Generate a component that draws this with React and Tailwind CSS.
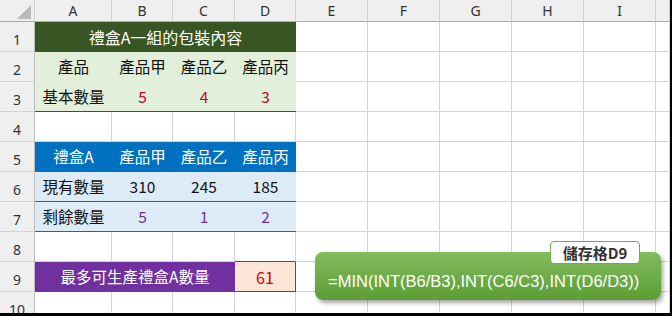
import React from "react";

const CJK = { fontFamily: '"Noto Sans CJK TC", "Noto Sans", sans-serif' };
const HDR = { fontFamily: '"Noto Sans", "Liberation Sans", sans-serif' };

const extraCols = ["w-[72px]", "w-[72px]", "w-[72px]", "w-[72px]", "w-[72px]", "w-[14px]"];

function RowHead({ n, h = "h-[30px]" }) {
  return (
    <div
      className={`w-[35px] ${h} shrink-0 bg-[#efefef] border-r border-b border-r-[#bcbcbc] border-b-[#d4d4d4] flex items-end justify-center pb-[2px] text-[14px] text-[#333] leading-none`}
      style={HDR}
    >
      <span className="pb-[2px]">{n}</span>
    </div>
  );
}

function Blank({ w, h = "h-[30px]", extra = "" }) {
  return <div className={`${w} ${h} shrink-0 border-r border-b border-[#d4d4d4] ${extra}`} />;
}

function Extras({ h = "h-[30px]" }) {
  return extraCols.map((w, i) => <Blank key={i} w={w} h={h} />);
}

function Cell({ w, bg, children, extra = "", color = "text-[#111]" }) {
  return (
    <div
      className={`${w} h-[30px] shrink-0 ${bg} ${color} flex items-center justify-center text-[15.5px] leading-none ${extra}`}
      style={CJK}
    >
      {children}
    </div>
  );
}

export default function App() {
  return (
    <div className="w-[672px] h-[316px] bg-black">
      <div className="relative w-[670px] h-[313px] bg-white overflow-hidden">
        {/* column header */}
        <div className="flex h-[22px]">
          <div className="w-[35px] h-[22px] shrink-0 bg-[#efefef] border-r border-b border-r-[#d0d0d0] border-b-[#ababab] flex justify-end items-end pr-[3px] pb-[2px]">
            <svg width="14" height="14" viewBox="0 0 14 14">
              <polygon points="14,0 14,14 0,14" fill="#b9b9b9" />
            </svg>
          </div>
          {[
            ["A", "w-[77px]"],
            ["B", "w-[61px]"],
            ["C", "w-[62px]"],
            ["D", "w-[61px]"],
            ["E", "w-[72px]"],
            ["F", "w-[72px]"],
            ["G", "w-[72px]"],
            ["H", "w-[72px]"],
            ["I", "w-[72px]"],
            ["", "w-[14px]"],
          ].map(([l, w]) => (
            <div
              key={w + l}
              className={`${w} h-[22px] shrink-0 bg-[#efefef] border-r border-b border-r-[#d0d0d0] border-b-[#ababab] flex items-center justify-center text-[14px] text-[#333] leading-none`}
              style={HDR}
            >
              {l}
            </div>
          ))}
        </div>

        {/* row 1 */}
        <div className="flex">
          <RowHead n="1" />
          <Cell w="w-[261px]" bg="bg-[#375623]" color="text-white" extra="text-[16px]">
            禮盒A一組的包裝內容
          </Cell>
          <Extras />
        </div>

        {/* row 2 */}
        <div className="flex">
          <RowHead n="2" />
          <Cell w="w-[77px]" bg="bg-[#e2efda]">產品</Cell>
          <Cell w="w-[61px]" bg="bg-[#e2efda]">產品甲</Cell>
          <Cell w="w-[62px]" bg="bg-[#e2efda]">產品乙</Cell>
          <Cell w="w-[61px]" bg="bg-[#e2efda]">產品丙</Cell>
          <Extras />
        </div>

        {/* row 3 */}
        <div className="flex">
          <RowHead n="3" />
          <Cell w="w-[77px]" bg="bg-[#e2efda]" extra="border-b border-[#375623]">基本數量</Cell>
          <Cell w="w-[61px]" bg="bg-[#e2efda]" color="text-[#c8002c]" extra="border-b border-[#375623]">5</Cell>
          <Cell w="w-[62px]" bg="bg-[#e2efda]" color="text-[#c8002c]" extra="border-b border-[#375623]">4</Cell>
          <Cell w="w-[61px]" bg="bg-[#e2efda]" color="text-[#c8002c]" extra="border-b border-[#375623]">3</Cell>
          <Extras />
        </div>

        {/* row 4 */}
        <div className="flex">
          <RowHead n="4" />
          <Blank w="w-[77px]" />
          <Blank w="w-[61px]" />
          <Blank w="w-[62px]" />
          <Blank w="w-[61px]" />
          <Extras />
        </div>

        {/* row 5 */}
        <div className="flex">
          <RowHead n="5" />
          <Cell w="w-[77px]" bg="bg-[#0070c0]" color="text-white">禮盒A</Cell>
          <Cell w="w-[61px]" bg="bg-[#0070c0]" color="text-white">產品甲</Cell>
          <Cell w="w-[62px]" bg="bg-[#0070c0]" color="text-white">產品乙</Cell>
          <Cell w="w-[61px]" bg="bg-[#0070c0]" color="text-white">產品丙</Cell>
          <Extras />
        </div>

        {/* row 6 */}
        <div className="flex">
          <RowHead n="6" />
          <Cell w="w-[77px]" bg="bg-[#ddebf7]" extra="border-b border-[#0070c0]">現有數量</Cell>
          <Cell w="w-[61px]" bg="bg-[#ddebf7]" extra="border-b border-[#0070c0]">310</Cell>
          <Cell w="w-[62px]" bg="bg-[#ddebf7]" extra="border-b border-[#0070c0]">245</Cell>
          <Cell w="w-[61px]" bg="bg-[#ddebf7]" extra="border-b border-[#0070c0]">185</Cell>
          <Extras />
        </div>

        {/* row 7 */}
        <div className="flex">
          <RowHead n="7" />
          <Cell w="w-[77px]" bg="bg-[#ddebf7]" extra="border-b border-[#0070c0]">剩餘數量</Cell>
          <Cell w="w-[61px]" bg="bg-[#ddebf7]" color="text-[#7030a0]" extra="border-b border-[#0070c0]">5</Cell>
          <Cell w="w-[62px]" bg="bg-[#ddebf7]" color="text-[#7030a0]" extra="border-b border-[#0070c0]">1</Cell>
          <Cell w="w-[61px]" bg="bg-[#ddebf7]" color="text-[#7030a0]" extra="border-b border-[#0070c0]">2</Cell>
          <Extras />
        </div>

        {/* row 8 */}
        <div className="flex">
          <RowHead n="8" />
          <Blank w="w-[77px]" />
          <Blank w="w-[61px]" />
          <Blank w="w-[62px]" />
          <div className="w-[61px] h-[30px] shrink-0 border-r border-b border-r-[#d4d4d4] border-b-[#7030a0]" />
          <Extras />
        </div>

        {/* row 9 */}
        <div className="flex">
          <RowHead n="9" />
          <Cell w="w-[200px]" bg="bg-[#7030a0]" color="text-white">
            最多可生產禮盒A數量
          </Cell>
          <Cell
            w="w-[61px]"
            bg="bg-[#fce4d6]"
            color="text-[#d00000]"
            extra="border-r border-b border-[#7030a0] text-[16px]"
          >
            61
          </Cell>
          <Extras />
        </div>

        {/* row 10 */}
        <div className="flex">
          <RowHead n="10" h="h-[30px]" />
          <Blank w="w-[77px]" />
          <Blank w="w-[61px]" />
          <Blank w="w-[62px]" />
          <Blank w="w-[61px]" />
          <Extras />
        </div>

        {/* formula callout */}
        <div className="absolute left-[315px] top-[252px] w-[346px] h-[48px] rounded-[8px] bg-gradient-to-b from-[#83bd5e] to-[#5c9d33] shadow-[2px_3px_4px_rgba(0,0,0,0.35)] flex items-center pl-[13px] pt-[10px]">
          <span
            className="text-white text-[16.5px] leading-none whitespace-nowrap"
            style={{ fontFamily: '"Liberation Sans", Arial, sans-serif' }}
          >
            =MIN(INT(B6/B3),INT(C6/C3),INT(D6/D3))
          </span>
        </div>
        <div
          className="absolute left-[550px] top-[241px] w-[90px] h-[23px] rounded-[4px] bg-white border border-[#70ad47] flex items-center justify-center text-[15px] font-bold text-[#333] leading-none"
          style={CJK}
        >
          儲存格D9
        </div>
      </div>
    </div>
  );
}
